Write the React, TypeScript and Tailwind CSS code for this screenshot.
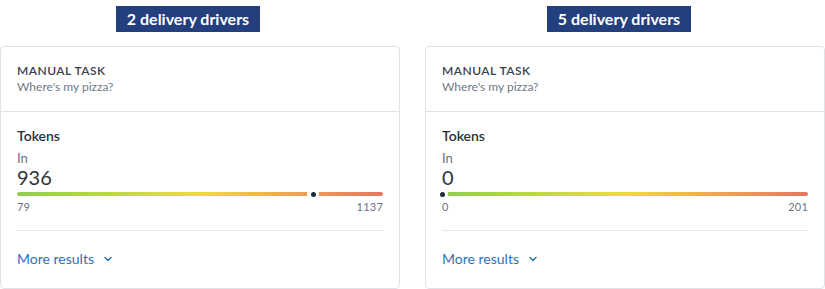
import React from 'react';
import { ChevronDown } from 'lucide-react';

interface CardProps {
  drivers: number;
  value: number;
  min: number;
  max: number;
  badgeOffset: string;
}

const TokenBar: React.FC<{ value: number; min: number; max: number }> = ({ value, min, max }) => {
  const pct = Math.max(0, Math.min(1, (value - min) / (max - min))) * 100;
  return (
    <div className="relative h-[4px] w-full">
      <div className="h-full w-full rounded-full bg-[linear-gradient(90deg,#8fce4c_0%,#b9d849_25%,#f0db3c_50%,#f0a552_75%,#e6775f_100%)]" />
      <div
        className="absolute top-1/2 h-[12px] w-[12px] -translate-x-1/2 -translate-y-1/2 rounded-full bg-white flex items-center justify-center"
        style={{ left: `${pct}%` }}
      >
        <div className="h-[5px] w-[5px] rounded-full bg-[#1f2a3a]" />
      </div>
    </div>
  );
};

const TaskCard: React.FC<CardProps> = ({ drivers, value, min, max, badgeOffset }) => (
  <div className="flex flex-col">
    <div className="flex h-[46px] items-start">
      <div
        className={`${badgeOffset} mt-[6px] bg-[#233f7e] w-[144px] h-[26px] flex items-center justify-center text-[16px] font-bold text-white leading-none`}
      >
        {drivers} delivery drivers
      </div>
    </div>
    <div className="w-[400px] h-[243px] rounded-[4px] border border-[#dfe3e8] bg-white">
      <div className="px-4 pt-[16px] h-[65px] border-b border-[#dfe3e8]">
        <div className="text-[12px] leading-[16px] font-semibold tracking-[0.04em] text-[#3b414c]">MANUAL TASK</div>
        <div className="text-[12px] leading-[16px] text-[#6e7987]">Where's my pizza?</div>
      </div>
      <div className="px-4 pt-[14px]">
        <div className="text-[14px] leading-[20px] font-semibold text-[#2a303b]">Tokens</div>
        <div className="mt-[4px] text-[13px] leading-[16px] text-[#6b7380]">In</div>
        <div className="text-[20px] leading-[22px] text-[#2d333d]">{value}</div>
        <div className="mt-[4px]">
          <TokenBar value={value} min={min} max={max} />
        </div>
        <div className="mt-[3px] flex justify-between text-[11px] leading-[16px] tracking-[0.02em] text-[#6b7380]">
          <span>{min}</span>
          <span>{max}</span>
        </div>
        <div className="mt-[15px] border-t border-[#e3e6ea]" />
        <div className="mt-[18px] flex items-center gap-[8px] text-[14px] leading-[20px] text-[#2e72b6]">
          More results
          <ChevronDown className="w-[12px] h-[12px]" strokeWidth={3} />
        </div>
      </div>
    </div>
  </div>
);

export default function App() {
  return (
    <div
      className="flex gap-[25px] bg-white w-[825px] h-[289px]"
      style={{ fontFamily: 'Lato, "Noto Sans", sans-serif' }}
    >
      <TaskCard drivers={2} value={936} min={79} max={1137} badgeOffset="ml-[116px]" />
      <TaskCard drivers={5} value={0} min={0} max={201} badgeOffset="ml-[122px]" />
    </div>
  );
}
